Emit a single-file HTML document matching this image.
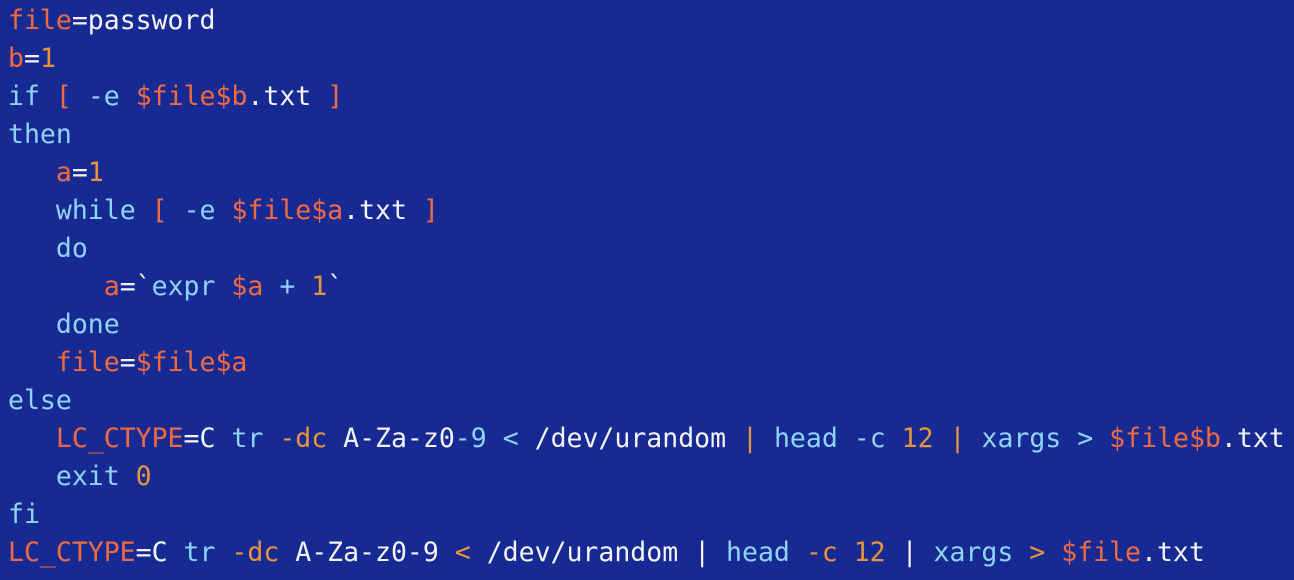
<!DOCTYPE html>
<html><head><meta charset="utf-8"><style>
html,body{margin:0;padding:0;background:#172a94;width:1294px;height:580px;overflow:hidden}
pre{margin:0;padding:2px 0 0 8px;font-family:"DejaVu Sans Mono","Liberation Mono",monospace;font-size:26.5px;line-height:38px;color:#f4f4f4}
.k{color:#8ed4f6}.v{color:#f26a40}.n{color:#e8953a}.g{color:#e8953a}
</style></head><body><pre><span class="v">file</span>=password
<span class="v">b</span>=<span class="n">1</span>
<span class="k">if</span> <span class="v">[</span> <span class="k">-e</span> <span class="v">$file$b</span>.txt <span class="v">]</span>
<span class="k">then</span>
   <span class="v">a</span>=<span class="n">1</span>
   <span class="k">while</span> <span class="v">[</span> <span class="k">-e</span> <span class="v">$file$a</span>.txt <span class="v">]</span>
   <span class="k">do</span>
      <span class="v">a</span>=`<span class="k">expr</span> <span class="v">$a</span> <span class="k">+</span> <span class="n">1</span>`
   <span class="k">done</span>
   <span class="v">file</span>=<span class="v">$file$a</span>
<span class="k">else</span>
   <span class="v">LC_CTYPE</span>=C <span class="k">tr</span> <span class="g">-dc</span> A-Za-z0<span class="k">-9</span> <span class="k">&lt;</span> /dev/urandom <span class="g">|</span> <span class="k">head</span> <span class="k">-c</span> <span class="n">12</span> <span class="g">|</span> <span class="k">xargs</span> <span class="k">&gt;</span> <span class="v">$file$b</span>.txt
   <span class="k">exit</span> <span class="n">0</span>
<span class="k">fi</span>
<span class="v">LC_CTYPE</span>=C <span class="k">tr</span> <span class="g">-dc</span> A-Za-z0-9 <span class="g">&lt;</span> /dev/urandom | <span class="k">head</span> <span class="g">-c</span> <span class="n">12</span> | <span class="k">xargs</span> <span class="g">&gt;</span> <span class="v">$file</span>.txt</pre></body></html>
